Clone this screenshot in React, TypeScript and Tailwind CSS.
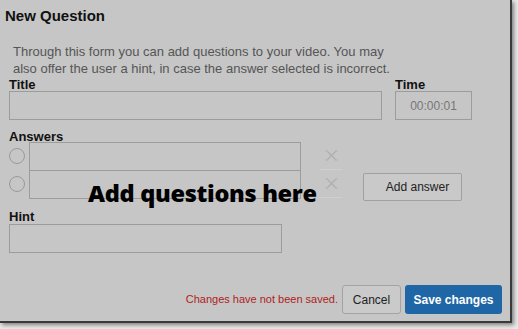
import React from 'react';

const XIcon = () => (
  <svg width="13" height="11" viewBox="0 0 13 11" fill="none" stroke="#adadad" strokeWidth="1.1">
    <path d="M2.5 1.5 L10.5 9.5 M10.5 1.5 L2.5 9.5" />
    <path d="M0.5 1 L3 1 M10 1 L12.5 1 M0.5 10 L3 10 M10 10 L12.5 10" />
  </svg>
);

function AnswerRow() {
  return (
    <div className="flex items-center">
      <span className="w-[16px] h-[16px] rounded-full border border-[#9a9a9a] shrink-0" />
      <div className="ml-[4px] w-[272px] h-[29px] border border-[#9c9c9c] -mb-px" />
      <div className="ml-[19px] w-[22px] h-[28px] flex items-center justify-center border-b border-[#d0d0d0]">
        <XIcon />
      </div>
    </div>
  );
}

export default function App() {
  return (
    <div className="relative w-[518px] h-[329px] bg-[#e8e8e8] font-['Liberation_Sans',Arial,sans-serif]">
      <div className="w-[512px] h-[323px] bg-[#c6c6c6] border-r-2 border-b-2 border-[#3a3a3a] shadow-[2px_2px_4px_rgba(0,0,0,0.45)] flex flex-col">
        <h1 className="pl-[5px] pt-[6px] text-[15px] leading-[20px] font-bold text-[#111]">New Question</h1>

        <p className="mt-[17px] ml-[13px] w-[384px] text-[13px] leading-[17px] text-[#555]">
          Through this form you can add questions to your video. You may also offer the user a hint, in case the answer selected is incorrect.
        </p>

        <div className="flex ml-[9px]">
          <div className="flex flex-col">
            <label className="text-[13px] leading-[15px] font-bold text-[#111]">Title</label>
            <div className="mt-[-1px] w-[373px] h-[29px] border border-[#9c9c9c]" />
          </div>
          <div className="flex flex-col ml-[13px]">
            <label className="text-[13px] leading-[15px] font-bold text-[#111]">Time</label>
            <div className="mt-[-1px] w-[77px] h-[29px] border border-[#9c9c9c] flex items-center justify-center text-[12px] text-[#777]">
              00:00:01
            </div>
          </div>
        </div>

        <label className="ml-[9px] mt-[9px] text-[13px] leading-[15px] font-bold text-[#111]">Answers</label>
        <div className="flex ml-[9px] mt-[-2px]">
          <div className="flex flex-col">
            <AnswerRow />
            <AnswerRow />
          </div>
          <button className="ml-[21px] mt-[31px] w-[99px] h-[28px] border border-[#a0a0a0] rounded-[2px] bg-[#c9c9c9] text-[12px] text-[#222] pl-[10px]">
            Add answer
          </button>
        </div>

        <label className="ml-[9px] mt-[8px] text-[13px] leading-[15px] font-bold text-[#111]">Hint</label>
        <div className="ml-[9px] mt-0 w-[273px] h-[29px] border border-[#9c9c9c]" />

        <div className="mt-auto mb-[7px] flex items-center justify-end pr-[8px]">
          <span className="text-[11px] text-[#b01c1c] mr-[4px]">Changes have not been saved.</span>
          <button className="w-[59px] h-[29px] border border-[#a3a3a3] rounded-[3px] bg-[#cacaca] text-[12px] text-[#222]">
            Cancel
          </button>
          <button className="ml-[4px] w-[97px] h-[29px] rounded-[3px] bg-[#1f66a6] text-[12px] font-bold text-white">
            Save changes
          </button>
        </div>
      </div>

      <div className="absolute left-[88px] top-[178px] text-[23.5px] leading-[30px] font-extrabold tracking-[-0.3px] text-black font-['Open_Sans',sans-serif] pointer-events-none">
        Add questions here
      </div>
    </div>
  );
}
